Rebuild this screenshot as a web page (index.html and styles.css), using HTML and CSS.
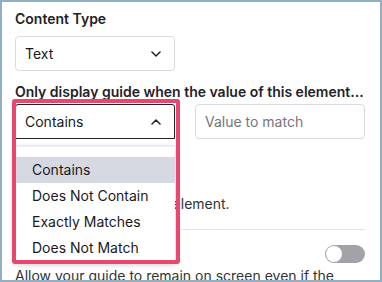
FILE: index.html
```html
<!DOCTYPE html>
<html lang="en">
<head>
  <meta charset="UTF-8" />
  <title>Guide Settings</title>
  <link rel="stylesheet" href="styles.css">
</head>
<body>
  <div class="frame">
    <div class="field-label">Content Type</div>
    <div class="select">
      <span>Text</span>
      <svg class="chevron" width="10" height="6" viewBox="0 0 10 6"><path d="M1 1l4 4 4-4" fill="none" stroke="#222" stroke-width="1.5" stroke-linecap="round" stroke-linejoin="round"/></svg>
    </div>

    <div class="field-label spaced">Only display guide when the value of this element...</div>
    <div class="match-row">
      <div class="select-wrap">
        <div class="select open">
          <span>Contains</span>
          <svg class="chevron" width="10" height="6" viewBox="0 0 10 6"><path d="M1 5l4-4 4 4" fill="none" stroke="#222" stroke-width="1.5" stroke-linecap="round" stroke-linejoin="round"/></svg>
        </div>

        <!-- open dropdown -->
        <ul class="menu">
          <li class="selected">Contains</li>
          <li>Does Not Contain</li>
          <li>Exactly Matches</li>
          <li>Does Not Match</li>
        </ul>

        <!-- highlight annotation -->
        <div class="highlight"></div>
      </div>
      <input class="text-input" type="text" placeholder="Value to match" />
    </div>

    <p class="help match-help">Matches the text in this element.</p>

    <hr class="divider">

    <div class="toggle-row">
      <span class="toggle"><span class="knob"></span></span>
    </div>
    <p class="help">Allow your guide to remain on screen even if the element goes away.</p>
  </div>
</body>
</html>
```

FILE: styles.css
```css
* {
  box-sizing: border-box;
  margin: 0;
  padding: 0;
  font-family: 'Inter', 'Noto Sans', sans-serif;
}

body {
  background: #fff;
}

.frame {
  width: 382px;
  height: 282px;
  border: 2px solid #8eb0c2;
  padding: 8px 15px 0 13px;
  overflow: hidden;
  background: #fff;
  color: #333;
}

.field-label {
  font-size: 14px;
  line-height: 17px;
  font-weight: 600;
  color: #1f2328;
  margin-bottom: 9px;
}

.field-label.spaced {
  margin-top: 12px;
  margin-bottom: 4px;
}

.select {
  width: 160px;
  height: 35px;
  border: 1px solid #d9dbe1;
  border-radius: 4px;
  display: flex;
  align-items: center;
  justify-content: space-between;
  padding: 0 13px 0 9px;
  font-size: 14px;
  color: #1a1a1a;
  background: #fff;
}

.select.open {
  border-color: #222;
  border-radius: 3px 3px 0 0;
}

.match-row {
  display: flex;
  gap: 20px;
}

.select-wrap {
  position: relative;
}

.text-input {
  width: 170px;
  height: 35px;
  border: 1px solid #d9dbe1;
  border-radius: 4px;
  padding: 0 9px;
  font-size: 14px;
  color: #333;
  outline: none;
}

.text-input::placeholder {
  color: #74767c;
}

.menu {
  position: absolute;
  top: 41px;
  left: 0;
  width: 160px;
  list-style: none;
  background: #fff;
  border-top: 2px solid #ebebed;
  padding: 10px 0 0;
  box-shadow: 0 3px 6px rgba(0, 0, 0, 0.25);
  z-index: 2;
}

.menu li {
  height: 26px;
  line-height: 26px;
  padding-left: 17px;
  font-size: 14px;
  color: #1a1a1a;
}

.menu li.selected {
  background: #d6d9e2;
}

.highlight {
  position: absolute;
  top: -5px;
  left: -3px;
  width: 168px;
  height: 165px;
  border: 4px solid #ea4770;
  border-radius: 3px;
  z-index: 3;
}

.help {
  font-size: 14px;
  line-height: 18px;
  color: #333;
}

.match-help {
  margin-top: 56px;
}

.divider {
  border: none;
  border-top: 1px solid #e4e5ea;
  margin: 16px 0 15px;
  width: 350px;
}

.toggle-row {
  display: flex;
  justify-content: flex-end;
  width: 350px;
  margin-bottom: 4px;
}

.toggle {
  width: 40px;
  height: 18px;
  border-radius: 9px;
  background: #a2a2a7;
  padding: 1px;
  display: flex;
}

.knob {
  width: 16px;
  height: 16px;
  border-radius: 50%;
  background: #fff;
}
```
